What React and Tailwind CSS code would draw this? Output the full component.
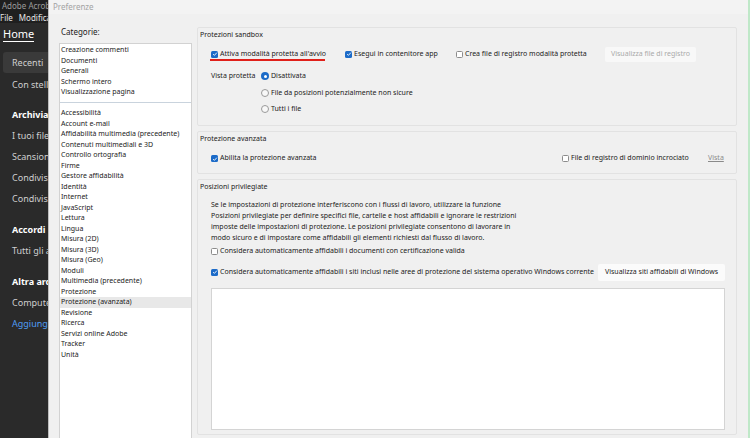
import React from "react";

const font = { fontFamily: '"Noto Sans", "Open Sans", sans-serif' };

const topCategories = [
  "Creazione commenti",
  "Documenti",
  "Generali",
  "Schermo intero",
  "Visualizzazione pagina",
];

const categories = [
  "Accessibilità",
  "Account e-mail",
  "Affidabilità multimedia (precedente)",
  "Contenuti multimediali e 3D",
  "Controllo ortografia",
  "Firme",
  "Gestore affidabilità",
  "Identità",
  "Internet",
  "JavaScript",
  "Lettura",
  "Lingua",
  "Misura (2D)",
  "Misura (3D)",
  "Misura (Geo)",
  "Moduli",
  "Multimedia (precedente)",
  "Protezione",
  "Protezione (avanzata)",
  "Revisione",
  "Ricerca",
  "Servizi online Adobe",
  "Tracker",
  "Unità",
];

function Check({ checked }) {
  if (checked) {
    return (
      <span className="w-[7px] h-[7px] rounded-[1.5px] bg-[#1c6bc8] flex items-center justify-center shrink-0">
        <svg viewBox="0 0 8 8" className="w-[6px] h-[6px]">
          <path d="M1.5 4.2 L3.2 5.8 L6.5 2.2" fill="none" stroke="white" strokeWidth="1.2" />
        </svg>
      </span>
    );
  }
  return <span className="w-[7px] h-[7px] rounded-[1.5px] border border-[#8c8c8c] bg-white shrink-0" />;
}

function Radio({ checked }) {
  if (checked) {
    return (
      <span className="w-[8px] h-[8px] rounded-full bg-[#1c6bc8] flex items-center justify-center shrink-0">
        <span className="w-[3px] h-[3px] rounded-full bg-white" />
      </span>
    );
  }
  return <span className="w-[8px] h-[8px] rounded-full border border-[#9a9a9a] bg-[#f8f8f8] shrink-0" />;
}

function CheckItem({ checked, label, className = "" }) {
  return (
    <div className={`flex items-center gap-[2px] whitespace-nowrap ${className}`}>
      <Check checked={checked} />
      <span>{label}</span>
    </div>
  );
}

function NavRow({ children, className = "" }) {
  return <div className={`h-[21px] flex items-center pl-[12px] whitespace-nowrap ${className}`}>{children}</div>;
}

export default function App() {
  return (
    <div className="w-[750px] h-[438px] flex overflow-hidden bg-[#2a2a2a]" style={font}>
      {/* Acrobat behind the dialog */}
      <div className="w-[48px] shrink-0 flex flex-col overflow-hidden text-[9px] text-[#cfcfcf]">
        <div className="h-[12px] bg-[#1f1f1f] flex items-center gap-[2px] whitespace-nowrap">
          <span className="w-[4px] h-[9px] bg-[#e0251b] self-start" />
          <span className="text-[8px] text-[#9c9c9c]">Adobe Acrobat</span>
        </div>
        <div className="h-[11px] bg-[#1f1f1f] flex items-center gap-[6px] whitespace-nowrap text-[8px] text-[#e6e6e6]">
          <span>File</span>
          <span>Modifica</span>
        </div>
        <div className="h-[29px] flex items-start pt-[3px] pl-[3px] gap-[16px] whitespace-nowrap text-[11px] text-white">
          <span className="border-b-[1.5px] border-white leading-[15px]">Home</span>
          <span>S</span>
        </div>
        <div className="ml-[3px] h-[21px] bg-[#3a3a3a] rounded-l-[3px] flex items-center pl-[9px] whitespace-nowrap">
          Recenti
        </div>
        <NavRow className="mt-[1px]">Con stella</NavRow>
        <NavRow className="mt-[9px] font-bold text-white">Archiviazione</NavRow>
        <NavRow>I tuoi file</NavRow>
        <NavRow>Scansioni</NavRow>
        <NavRow>Condivisi da te</NavRow>
        <NavRow>Condivisi da altri</NavRow>
        <NavRow className="mt-[10px] font-bold text-white">Accordi</NavRow>
        <NavRow>Tutti gli accordi</NavRow>
        <NavRow className="mt-[10px] font-bold text-white">Altra archiviazione</NavRow>
        <NavRow>Computer</NavRow>
        <NavRow className="text-[#4f9cf4]">Aggiungi account</NavRow>
      </div>

      {/* Preferences dialog */}
      <div className="flex-1 flex flex-col bg-[#f0f0f0] border-l border-[#bdbdbd] text-[7px] text-[#1b1b1b]">
        <div className="h-[14px] bg-[#f3f3f3] flex items-center pl-[4px] text-[8px] text-[#a3a3a3]">Preferenze</div>
        <div className="flex flex-1 min-h-0 pl-[10px]">
          {/* Categories */}
          <div className="w-[133px] flex flex-col shrink-0">
            <div className="h-[29px] flex items-center pl-[2px] text-[8px] pt-[7px]">Categorie:</div>
            <div className="flex-1 bg-white border border-b-0 border-[#d2d2d2] pt-[1px] leading-[10.5px]">
              {topCategories.map((c) => (
                <div key={c} className="pl-[1px] whitespace-nowrap">{c}</div>
              ))}
              <div className="h-[10.5px] flex items-center">
                <div className="w-full h-px bg-[#c9d3dd]" />
              </div>
              {categories.map((c) => (
                <div
                  key={c}
                  className={`pl-[1px] whitespace-nowrap ${c === "Protezione (avanzata)" ? "bg-[#e8e8e8]" : ""}`}
                >
                  {c}
                </div>
              ))}
            </div>
          </div>

          {/* Settings */}
          <div className="w-[540px] ml-[5px] flex flex-col gap-[5px] pt-[13px] pb-[3px] shrink-0">
            {/* Protezioni sandbox */}
            <div className="border border-[#e2e2e2] rounded-[2px] pt-[2px] pb-[7px] pl-[2px]">
              <div className="h-[10px] leading-[10px]">Protezioni sandbox</div>
              <div className="mt-[8px] h-[12px] flex items-center pl-[11px]">
                <div className="relative w-[134px]">
                  <CheckItem checked label="Attiva modalità protetta all'avvio" />
                  <span className="absolute left-[-1px] top-[10px] w-[115px] h-[2px] bg-[#e0201a]" />
                </div>
                <CheckItem checked label="Esegui in contenitore app" className="w-[111px]" />
                <CheckItem label="Crea file di registro modalità protetta" className="w-[149px]" />
                <div className="w-[91px] h-[15px] bg-[#f8f8f8] rounded-[2px] flex items-center justify-center text-[#a9a9a9] whitespace-nowrap">
                  Visualizza file di registro
                </div>
              </div>
              <div className="mt-[8px] flex pl-[11px]">
                <div className="w-[50px] h-[16.5px] flex items-center">Vista protetta</div>
                <div className="flex flex-col">
                  <div className="h-[16.5px] flex items-center gap-[2px]">
                    <Radio checked />
                    <span>Disattivata</span>
                  </div>
                  <div className="h-[16.5px] flex items-center gap-[2px]">
                    <Radio />
                    <span>File da posizioni potenzialmente non sicure</span>
                  </div>
                  <div className="h-[16.5px] flex items-center gap-[2px]">
                    <Radio />
                    <span>Tutti i file</span>
                  </div>
                </div>
              </div>
            </div>

            {/* Protezione avanzata */}
            <div className="border border-[#e2e2e2] rounded-[2px] pt-[2px] pb-[8px] pl-[2px]">
              <div className="h-[10px] leading-[10px]">Protezione avanzata</div>
              <div className="mt-[9px] h-[12px] flex items-center pl-[11px]">
                <CheckItem checked label="Abilita la protezione avanzata" className="w-[351px]" />
                <CheckItem label="File di registro di dominio incrociato" className="w-[146px]" />
                <span className="underline text-[#8a8a8a]">Vista</span>
              </div>
            </div>

            {/* Posizioni privilegiate */}
            <div className="flex-1 border border-[#e2e2e2] rounded-[2px] pt-[2px] pl-[2px] pr-[11px] flex flex-col">
              <div className="h-[10px] leading-[10px]">Posizioni privilegiate</div>
              <div className="mt-[7px] pl-[11px] leading-[11px] whitespace-nowrap">
                <div>Se le impostazioni di protezione interferiscono con i flussi di lavoro, utilizzare la funzione</div>
                <div>Posizioni privilegiate per definire specifici file, cartelle e host affidabili e ignorare le restrizioni</div>
                <div>imposte delle impostazioni di protezione. Le posizioni privilegiate consentono di lavorare in</div>
                <div>modo sicuro e di impostare come affidabili gli elementi richiesti dal flusso di lavoro.</div>
              </div>
              <div className="mt-[3px] h-[12px] flex items-center pl-[11px]">
                <CheckItem label="Considera automaticamente affidabili i documenti con certificazione valida" />
              </div>
              <div className="mt-[6px] h-[17px] flex items-center justify-between pl-[11px]">
                <CheckItem
                  checked
                  label="Considera automaticamente affidabili i siti inclusi nelle aree di protezione del sistema operativo Windows corrente"
                />
                <div className="w-[127px] h-[17px] bg-[#fbfbfb] rounded-[2px] flex items-center justify-center whitespace-nowrap">
                  Visualizza siti affidabili di Windows
                </div>
              </div>
              <div className="mt-[7px] ml-[11px] h-[142px] bg-white border border-[#d4d4d4]" />
            </div>
          </div>
        </div>
      </div>
      <div className="w-[2px] shrink-0 bg-[#bfe8c8]" />
    </div>
  );
}
